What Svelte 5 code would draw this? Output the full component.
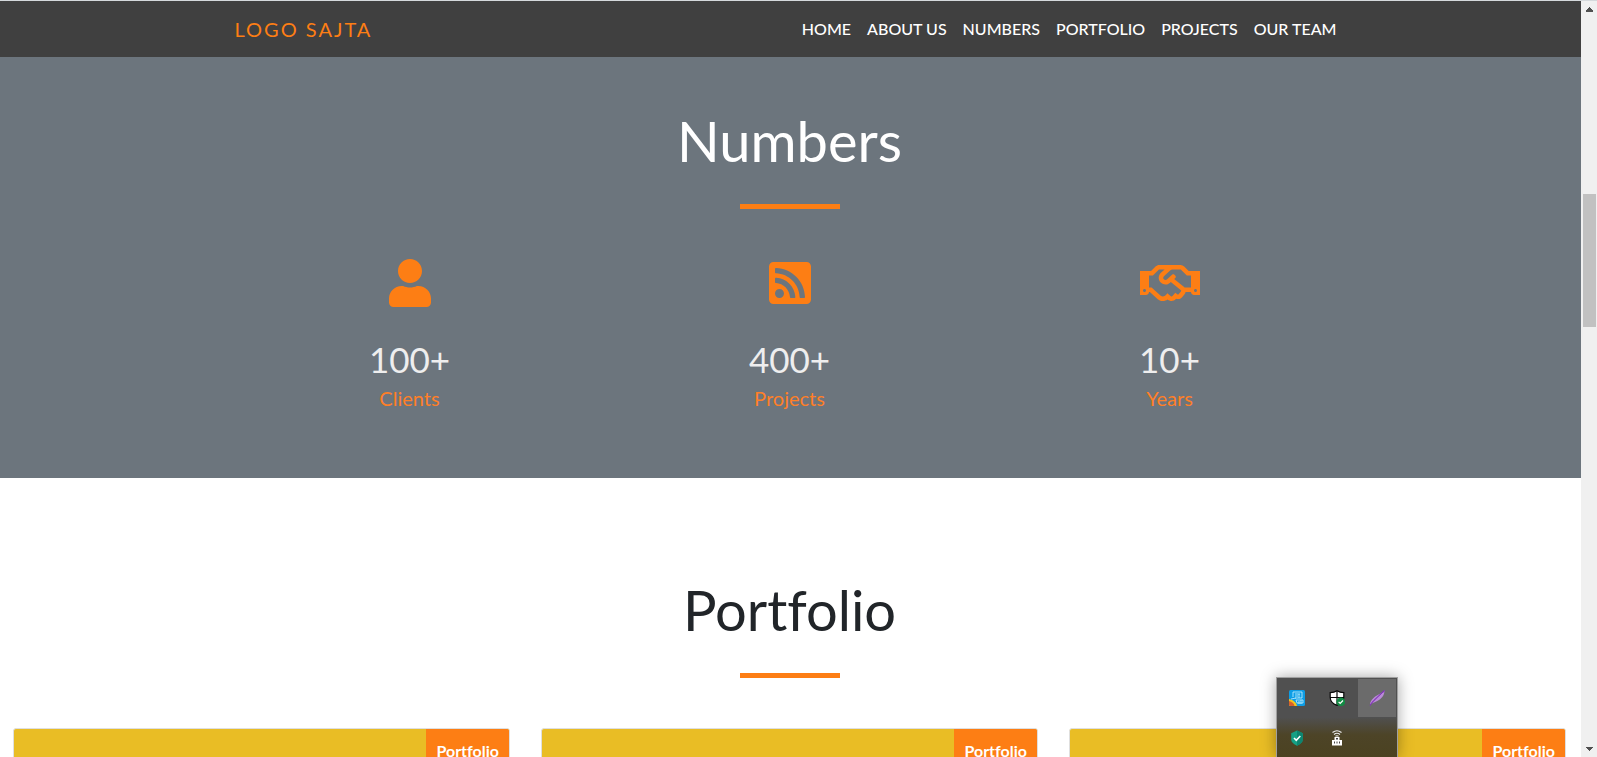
<script>
  const links = ['Home', 'About us', 'Numbers', 'Portfolio', 'Projects', 'Our team'];

  const stats = [
    {
      value: '100+',
      label: 'Clients',
      width: 448,
      path: 'M224 256c70.7 0 128-57.3 128-128S294.7 0 224 0 96 57.3 96 128s57.3 128 128 128zm89.6 32h-16.7c-22.2 10.2-46.9 16-72.9 16s-50.6-5.8-72.9-16h-16.7C60.2 288 0 348.2 0 422.4V464c0 26.5 21.5 48 48 48h352c26.5 0 48-21.5 48-48v-41.6c0-74.2-60.2-134.4-134.4-134.4z'
    },
    {
      value: '400+',
      label: 'Projects',
      width: 448,
      path: 'M400 32H48C21.49 32 0 53.49 0 80v352c0 26.51 21.49 48 48 48h352c26.51 0 48-21.49 48-48V80c0-26.51-21.49-48-48-48zM112 416c-26.51 0-48-21.49-48-48s21.49-48 48-48 48 21.49 48 48-21.49 48-48 48zm157.533 0h-34.335c-6.011 0-11.051-4.636-11.442-10.634-5.214-80.05-69.243-143.92-149.123-149.123-5.997-.39-10.633-5.431-10.633-11.441v-34.335c0-6.535 5.468-11.777 11.994-11.425 110.546 5.974 198.997 94.536 204.964 204.964.352 6.526-4.89 11.994-11.425 11.994zm103.027 0h-34.334c-6.161 0-11.175-4.882-11.427-11.038-5.598-136.535-115.204-246.161-251.76-251.76C68.882 152.949 64 147.935 64 141.774V107.44c0-6.454 5.338-11.664 11.787-11.432 167.83 6.025 302.21 141.191 308.205 308.205.232 6.449-4.978 11.787-11.432 11.787z'
    },
    {
      value: '10+',
      label: 'Years',
      width: 640,
      path: 'M519.2 127.9l-47.6-47.6A56.252 56.252 0 0 0 432 64H205.2c-14.8 0-29.1 5.9-39.6 16.3L118 127.9H0v255.7h64c17.6 0 31.8-14.2 31.9-31.7h9.1l84.6 76.4c30.9 25.1 73.8 25.7 105.6 3.8 12.5 10.8 26 15.9 41.1 15.9 18.2 0 35.3-7.4 48.8-24 22.1 8.7 48.2 2.6 64-16.8l26.2-32.3c5.6-6.9 9.1-14.8 10.9-23h57.9c.1 17.5 14.4 31.7 31.9 31.7h64V127.9H519.2zM48 351.6c-8.8 0-16-7.2-16-16s7.2-16 16-16 16 7.2 16 16c0 8.9-7.2 16-16 16zm390-6.9l-26.1 32.2c-2.8 3.4-7.8 4-11.3 1.2l-23.9-19.4-30 36.5c-6 7.3-15 4.8-18 2.4l-36.8-31.5-15.6 19.2c-13.9 17.1-39.2 19.7-55.3 6.6l-97.3-88H96V175.8h41.9l61.7-61.6c2-.8 3.7-1.5 5.7-2.3H262l-38.7 35.5c-29.4 26.9-31.1 72.3-4.4 101.3 14.8 16.2 61.2 41.2 101.5 4.4l8.2-7.5 108.2 87.8c3.4 2.8 3.9 7.9 1.2 11.3zm106-40.8h-69.2c-2.3-2.8-4.9-5.4-7.7-7.7l-102.7-83.4 12.5-11.4c6.5-6 7-16.1 1-22.6L367 167.1c-6-6.5-16.1-6.9-22.6-1l-55.2 50.6c-9.5 8.7-25.7 9.4-34.6 0-9.3-9.9-8.5-25.1 1.2-33.9l65.6-60.1c7.4-6.8 17-10.5 27-10.5l83.7-.2c2.1 0 4.1.8 5.5 2.3l61.7 61.6H544v128zm48 47.7c-8.8 0-16-7.2-16-16s7.2-16 16-16 16 7.2 16 16c0 8.9-7.2 16-16 16z'
    }
  ];

  const cards = [1, 2, 3];
</script>

<div class="window">
  <div class="page">
    <header class="navbar">
      <div class="container bar">
        <a class="brand" href="#home">LOGO SAJTA</a>
        <nav>
          {#each links as link}
            <a href="#{link.toLowerCase().replace(' ', '-')}">{link.toUpperCase()}</a>
          {/each}
        </nav>
      </div>
    </header>

    <section class="numbers" id="numbers">
      <h2>Numbers</h2>
      <div class="rule"></div>
      <div class="container stats">
        {#each stats as stat}
          <div class="stat">
            <svg class="icon" viewBox="0 0 {stat.width} 512" aria-hidden="true"><path d={stat.path} /></svg>
            <p class="value">{stat.value}</p>
            <p class="label">{stat.label}</p>
          </div>
        {/each}
      </div>
    </section>

    <section class="portfolio" id="portfolio">
      <h2>Portfolio</h2>
      <div class="rule"></div>
      <div class="cards">
        {#each cards as card (card)}
          <article class="card"><span class="badge">Portfolio</span></article>
        {/each}
      </div>
    </section>
  </div>

  <div class="scrollbar" aria-hidden="true">
    <svg viewBox="0 0 16 16"><path d="M8 6h1v1h1v1h1v1h1v2H5V9h1V8h1V7h1z" /></svg>
    <div class="track"><div class="thumb"></div></div>
    <svg viewBox="0 0 16 16"><path d="M5 6h7v1h-1v1h-1v1H9v1H8V9H7V8H6V7H5z" /></svg>
  </div>

  <div class="tray">
    <button aria-label="Graphics settings">
      <svg viewBox="0 0 16 16">
        <rect width="16" height="16" rx="1.5" fill="#0d9de6" />
        <path d="M0 9c4 1 7 3 8 7H1.500Q0 16 0 14.500z" fill="#f3c51c" />
        <path d="M0 11c3 1 5 2 5.500 5H1.500Q0 16 0 14.500z" fill="#d95f2b" />
        <path d="M4 2h9v6H6M4 2v5M6 4h5M6 6h3M10 4v4M2 9l5-1M7 10h7v3H8zM10 11v3M12 10v4" fill="none" stroke="#c9f1ff" stroke-width="0.8" />
      </svg>
    </button>
    <button aria-label="Windows security">
      <svg viewBox="0 0 16 16">
        <path d="M8 .7c2 1.400 4 1.900 6.800 1.900v4.600c0 3.800-2.600 6.600-6.800 8.200-4.200-1.600-6.800-4.400-6.800-8.200V2.600C4 2.600 6 2.100 8 .7z" fill="#fff" stroke="#080808" stroke-width="1.200" />
        <path d="M8 1v14M1 7.500h14" stroke="#080808" stroke-width="1.200" />
        <circle cx="11.800" cy="11.800" r="4.400" fill="#128a43" />
        <path d="M9.600 11.900l1.600 1.600 2.800-3" fill="none" stroke="#fff" stroke-width="1.200" />
      </svg>
    </button>
    <button class="active" aria-label="Feather">
      <svg viewBox="0 0 16 16">
        <path d="M1 15c0-4 3-7 6-9 3-2 6-3 8.500-5.500C15.500 5 13 8 10 10c-3 2-6 2-9 5z" fill="#b98ad8" />
        <path d="M4 11c2-3 6-5 10-8" stroke="#dcbcf0" stroke-width="0.8" fill="none" />
        <path d="M1 15.500C4 10 9 7 15.500.5" stroke="#8035b6" stroke-width="1.200" fill="none" />
      </svg>
    </button>
    <button aria-label="Protection">
      <svg viewBox="0 0 16 16">
        <path d="M8 .5l5.800 2.700v6.300c0 2.800-2.500 4.700-5.800 6.200-3.300-1.500-5.800-3.400-5.800-6.200V3.200z" fill="#16a085" />
        <path d="M8 .5l5.800 2.700v6.300c0 2.800-2.500 4.700-5.800 6.200z" fill="#0d8570" />
        <path d="M5 8l2.300 2.300L11.300 6" fill="none" stroke="#fff" stroke-width="1.600" />
      </svg>
    </button>
    <button aria-label="Wireless device">
      <svg viewBox="0 0 16 16">
        <path d="M3.500 2.500Q8-1 12.500 2.500M5 4.500q3-2.400 6 0M6.500 6.300q1.500-1.200 3 0" fill="none" stroke="#eee" stroke-width="1.100" />
        <path d="M5.500 7h5v3H13v5.500H3V10h2.500z" fill="#fff" />
        <path d="M5.500 11.500v2M8 11.500v2M10.500 11.500v2" stroke="#444" stroke-width="1" />
        <path d="M7 8h2v1.500H7z" fill="#444" />
      </svg>
    </button>
  </div>
</div>

<style>
  :global(body) {
    margin: 0;
    background: #fff;
  }
  .window {
    --orange: #fd7e14;
    position: relative;
    box-sizing: border-box;
    display: flex;
    height: 100vh;
    overflow: hidden;
    border-top: 1px solid #d5d9dc;
    color: #212529;
    font: 400 16px/24px Lato, sans-serif;
    font-variant-ligatures: none;
  }
  .page {
    flex: 1;
    min-width: 0;
  }
  .container {
    box-sizing: border-box;
    max-width: 1140px;
    margin: 0 auto;
  }
  .navbar {
    padding-right: 2px;
    background: #404040;
  }
  .bar {
    display: flex;
    align-items: center;
    justify-content: space-between;
    padding: 8px 15px;
  }
  a {
    text-decoration: none;
  }
  .brand {
    color: var(--orange);
    font-size: 20px;
    letter-spacing: 2px;
  }
  nav {
    display: flex;
  }
  nav a {
    padding: 8px;
    color: #fff;
    font-weight: 500;
  }
  h2 {
    margin: 0;
    font-size: 56px;
    font-weight: 400;
    line-height: 67px;
    text-align: center;
  }
  .rule {
    width: 100px;
    height: 5px;
    margin: 30px auto 50px;
    background: var(--orange);
  }
  .numbers {
    padding: 50px 2px 68px 0;
    background: #6c757d;
  }
  .numbers h2 {
    color: #fff;
  }
  .stats {
    display: grid;
    grid-template-columns: repeat(3, 1fr);
  }
  .stat {
    display: flex;
    flex-direction: column;
    align-items: center;
  }
  .icon {
    height: 48px;
    margin-bottom: 31px;
    fill: var(--orange);
  }
  .stat p {
    margin: 0;
  }
  .stat .value {
    margin-bottom: 6px;
    color: #eee;
    font-size: 35px;
    line-height: 42px;
  }
  .label {
    color: #ff7f27;
    font-size: 20px;
  }
  .portfolio {
    padding: 98px 2px 0 0;
  }
  .cards {
    display: grid;
    grid-template-columns: repeat(3, 1fr);
    gap: 31px;
    padding: 0 13px;
  }
  .card {
    display: flex;
    align-items: flex-start;
    justify-content: flex-end;
    height: 300px;
    border: 1px solid #dfdfdf;
    border-radius: 3px;
    overflow: hidden;
    background: #e9bd25;
  }
  .badge {
    padding: 10px;
    background: var(--orange);
    color: #fff;
    font-weight: 700;
  }
  .scrollbar {
    display: flex;
    flex-direction: column;
    width: 16px;
    background: #f0f0f0;
  }
  .scrollbar svg {
    width: 16px;
    height: 16px;
    fill: #505050;
  }
  .track {
    flex: 1;
    display: grid;
    grid-template-rows: 177fr 133fr 415fr;
    padding: 0 1px 0 2px;
  }
  .thumb {
    grid-row: 2;
    background: #c1c1c1;
  }
  .tray {
    position: absolute;
    right: 199px;
    bottom: 0;
    display: grid;
    grid-template-columns: repeat(3, 38px);
    gap: 2px;
    padding: 1px 1px 0;
    border: 1px solid #a0a0a0;
    border-bottom: 0;
    background: linear-gradient(#505050 50%, #4d4427 72%, #4b4221);
    box-shadow: 0 0 14px rgba(0, 0, 0, 0.35);
  }
  .tray button {
    display: grid;
    place-items: center;
    height: 38px;
    padding: 0;
    border: 0;
    background: none;
  }
  .tray .active {
    background: #6b6b6b;
  }
  .tray svg {
    width: 16px;
    height: 16px;
  }
</style>
